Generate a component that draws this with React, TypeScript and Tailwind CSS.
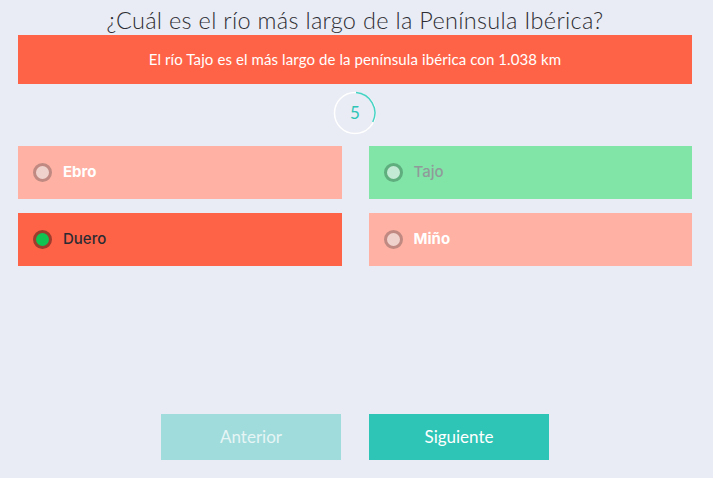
import { useState } from "react";

const options = [
  { label: "Ebro", state: "wrong" },
  { label: "Tajo", state: "correct" },
  { label: "Duero", state: "selected" },
  { label: "Miño", state: "wrong" },
];

const Timer = ({ value }: { value: number }) => {
  return (
    <div className="relative w-[44px] h-[44px] flex items-center justify-center">
      <svg width="44" height="44" viewBox="0 0 44 44" className="absolute inset-0">
        <circle cx="22" cy="22" r="20.5" fill="none" stroke="#ffffff" strokeWidth="1.5" />
        <path
          d="M 23 1.5 A 20.5 20.5 0 0 1 39.8 31"
          fill="none"
          stroke="#46d3c4"
          strokeWidth="1.5"
        />
      </svg>
      <span className="relative text-[17px] text-[#2ec4b6] font-['Lato',sans-serif]">{value}</span>
    </div>
  );
};

const Option = ({ label, state }: any) => {
  let box = "bg-[#ffb1a3]";
  let text = "text-white font-bold";
  let ring = "border-[#c08a82] bg-[#f0d2cd]";
  if (state === "correct") {
    box = "bg-[#80e5a7]";
    text = "text-[#909a9a] font-medium";
    ring = "border-[#5fae7e] bg-[#c3ead4]";
  }
  if (state === "selected") {
    box = "bg-[#ff6347]";
    text = "text-[#2b2b33] font-medium";
    ring = "border-[#9c3d2e] bg-[#11c552]";
  }
  return (
    <div className={`h-[53px] flex items-center pl-[15px] ${box}`}>
      <span className={`w-[19px] h-[19px] rounded-full border-[3px] ${ring}`} />
      <span className={`ml-[11px] text-[15px] font-['Inter',sans-serif] ${text}`}>{label}</span>
    </div>
  );
};

export default function App() {
  const [count] = useState(5);
  return (
    <div className="w-[713px] h-[478px] bg-[#e9ecf4] font-['Lato',sans-serif]">
      <div className="w-[710px] flex flex-col items-center">
        <h1 className="mt-[6px] h-[29px] text-[23.5px] leading-[29px] font-light text-[#2d2d33] tracking-[0.3px]">
          ¿Cuál es el río más largo de la Península Ibérica?
        </h1>
        <div className="w-[674px] h-[49px] bg-[#ff6347] flex items-center justify-center text-white text-[15px] tracking-[0.1px]">
          El río Tajo es el más largo de la península ibérica con 1.038 km
        </div>
        <div className="mt-[7px]">
          <Timer value={count} />
        </div>
        <div className="mt-[11px] w-[674px] grid grid-cols-2 gap-x-[27px] gap-y-[14px]">
          {options.map((o) => (
            <Option key={o.label} label={o.label} state={o.state} />
          ))}
        </div>
        <div className="mt-[148px] flex gap-[28px]">
          <button className="w-[180px] h-[46px] bg-[#a0dcdc] text-[#e6f5f5] text-[17px]">
            Anterior
          </button>
          <button className="w-[180px] h-[46px] bg-[#2ec5b6] text-white text-[17px]">
            Siguiente
          </button>
        </div>
      </div>
    </div>
  );
}
